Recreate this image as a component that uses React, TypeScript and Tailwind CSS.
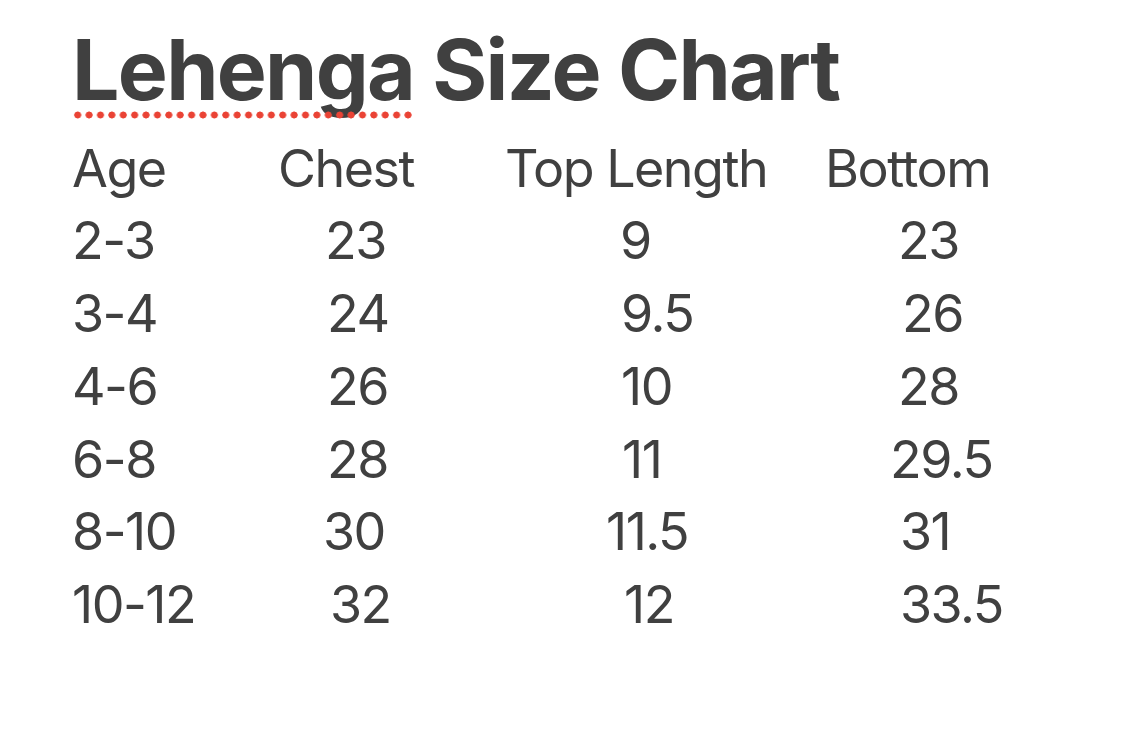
const rows: { cells: [string, number][] }[] = [
  { cells: [["Age", 0], ["Chest", 0], ["Top Length", 0], ["Bottom", 0]] },
  { cells: [["2-3", 0], ["23", 47], ["9", 115], ["23", 73]] },
  { cells: [["3-4", 0], ["24", 49], ["9.5", 116], ["26", 77]] },
  { cells: [["4-6", 0], ["26", 49], ["10", 116], ["28", 73]] },
  { cells: [["6-8", 0], ["28", 49], ["11", 117], ["29.5", 65]] },
  { cells: [["8-10", 0], ["30", 45], ["11.5", 101], ["31", 75]] },
  { cells: [["10-12", 0], ["32", 52], ["12", 119], ["33.5", 75]] },
];

export default function App() {
  return (
    <div className="min-h-screen w-full bg-white text-[#404040] pl-[72px] pt-[20px]" style={{ fontFamily: "Inter, 'Noto Sans', sans-serif" }}>
      <h1 className="text-[84px] font-bold leading-[100px] tracking-[-1.7px] whitespace-nowrap">
        <span className="relative">
          Lehenga
          <span className="absolute left-0 right-0 top-[92px] h-[8px] bg-[radial-gradient(circle,#ea4335_3.2px,transparent_3.8px)] bg-[length:11.4px_8px] bg-repeat-x" />
        </span>{" "}
        Size Chart
      </h1>
      <div className="mt-[12.7px]">
        {rows.map((row, i) => (
          <div key={i} className="grid grid-cols-[206px_227px_320px_200px] text-[52px] leading-[72.7px] tracking-[-1.5px] whitespace-nowrap">
            {row.cells.map(([text, offset], j) => (
              <div key={j} style={{ paddingLeft: offset }}>
                {text}
              </div>
            ))}
          </div>
        ))}
      </div>
    </div>
  );
}
